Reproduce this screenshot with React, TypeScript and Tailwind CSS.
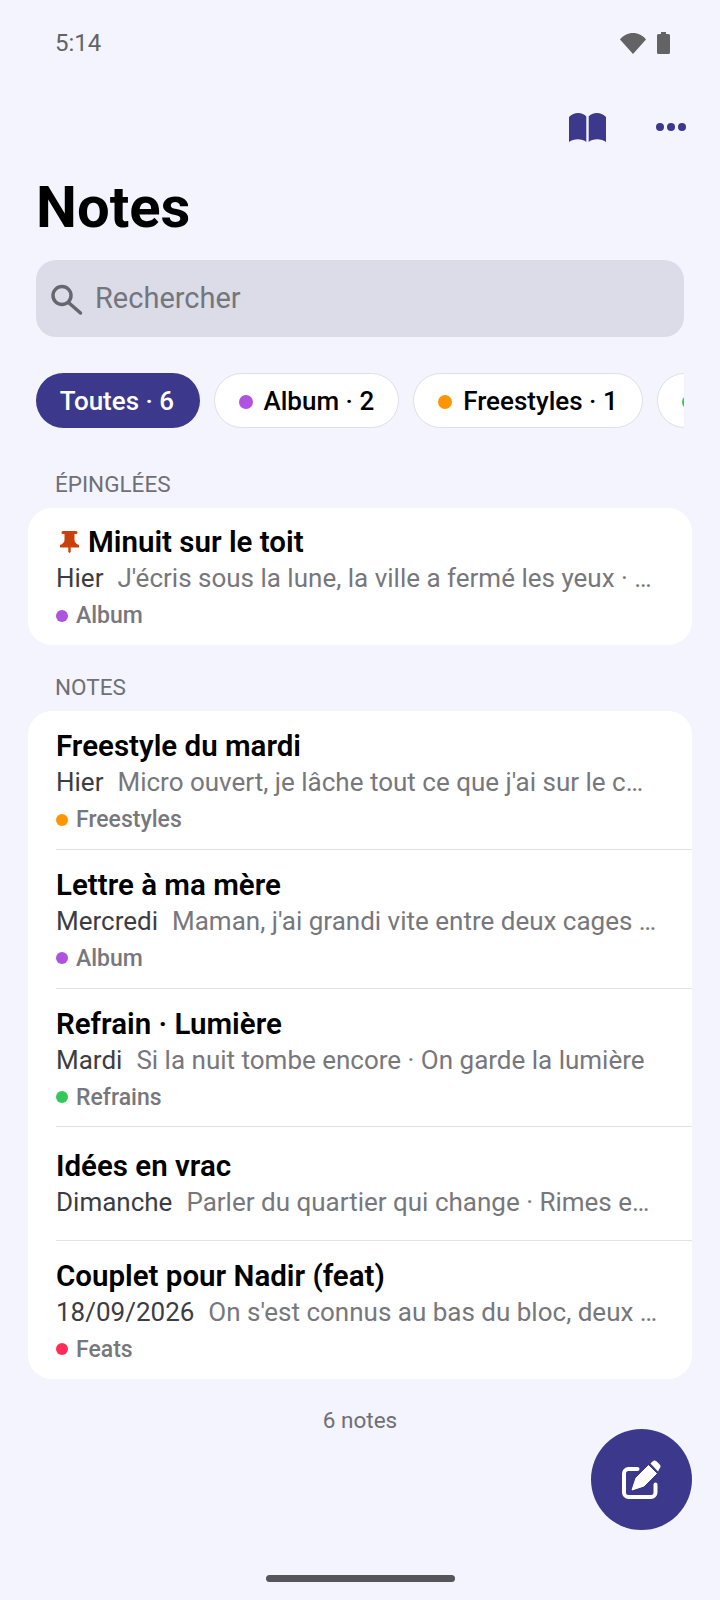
const notes = [
  { title: 'Freestyle du mardi', date: 'Hier', text: "Micro ouvert, je lâche tout ce que j'ai sur le c…", tag: 'Freestyles', dot: 'bg-[#ff9500]' },
  { title: 'Lettre à ma mère', date: 'Mercredi', text: "Maman, j'ai grandi vite entre deux cages …", tag: 'Album', dot: 'bg-[#af52de]' },
  { title: 'Refrain · Lumière', date: 'Mardi', text: 'Si la nuit tombe encore · On garde la lumière', tag: 'Refrains', dot: 'bg-[#34c759]' },
  { title: 'Idées en vrac', date: 'Dimanche', text: 'Parler du quartier qui change · Rimes e…' },
  { title: 'Couplet pour Nadir (feat)', date: '18/09/2026', text: "On s'est connus au bas du bloc, deux …", tag: 'Feats', dot: 'bg-[#ff2d55]' },
];

function Chip({ label, dot, padding }: { label: string; dot: string; padding: string }) {
  return (
    <div className={`flex h-[55px] shrink-0 items-center gap-[11px] rounded-full border border-[#dfdfe6] bg-white pt-[2px] text-[26px] font-medium text-black ${padding}`}>
      <span className={`h-[14px] w-[14px] rounded-full ${dot}`} />
      {label}
    </div>
  );
}

function NoteRow({ title, date, text, tag, dot, pinned, last }: {
  title: string; date: string; text: string; tag?: string; dot?: string; pinned?: boolean; last?: boolean;
}) {
  const spacing = !tag ? 'pt-[21px] pb-[19.5px]' : pinned ? 'pt-[16px] pb-[10.5px]' : last ? 'pt-[17px] pb-[10.5px]' : 'pt-[17px] pb-[10.25px]';
  return (
    <div className={`ml-7 ${spacing} ${last ? '' : 'border-b border-[#e2e2e6]'}`}>
      <div className="flex h-[36px] items-center text-[29.5px] font-semibold leading-[36px] text-black">
        {pinned && (
          <svg viewBox="0 0 19 22" className="ml-[4px] mr-[9px] h-[22px] w-[19px]" fill="#c9410a">
            <path d="M3 0h13a1.5 1.5 0 0 1 0 3h-1.5v6c0 2.5 2 4 4.5 5v2.5H10.7V21l-1.2 1-1.2-1v-4.5H0V14c2.5-1 4.5-2.5 4.5-5V3H3a1.5 1.5 0 0 1 0-3Z" />
          </svg>
        )}
        {title}
      </div>
      <div className="flex h-[36px] items-center whitespace-nowrap text-[26px] leading-[36px]">
        <span className="text-[#3c3c43]">{date}</span>
        <span className="ml-[14px] text-[#77777c]">{text}</span>
      </div>
      {tag && (
        <div className="mt-[2.5px] flex h-[36px] items-center gap-2 text-[23px] font-medium text-[#77777c]">
          <span className={`mb-[2px] h-[12px] w-[12px] rounded-full ${dot}`} />
          {tag}
        </div>
      )}
    </div>
  );
}

export default function App() {
  return (
    <div className="relative h-[1600px] w-[720px] overflow-hidden bg-[#f3f4fe] font-['Roboto',sans-serif]">
      {/* status bar */}
      <div className="flex h-[86px] items-center justify-between pl-[55px] pr-[50px] text-[24px] text-[#636366]">
        <span>5:14</span>
        <div className="flex items-center gap-[11px]">
          <svg viewBox="0 0 26 21" className="h-[21px] w-[26px]" fill="#636366">
            <path d="M0 6.5C3 2.5 8 0 13 0s10 2.5 13 6.5L13 21Z" />
          </svg>
          <svg viewBox="0 0 13 22" className="h-[22px] w-[13px]" fill="#636366">
            <path d="M4 0h5v2h2.5A1.5 1.5 0 0 1 13 3.5v17a1.5 1.5 0 0 1-1.500 1.500h-10A1.500 1.500 0 0 1 0 20.500v-17A1.500 1.500 0 0 1 1.500 2H4Z" />
          </svg>
        </div>
      </div>

      {/* actions */}
      <div className="mt-[13px] flex h-[56px] items-center justify-end gap-[50px] pr-[34px]">
        <svg viewBox="0 0 37 29" className="h-[29px] w-[37px]" fill="#3c388c">
          <path d="M0 4C2.500 1.200 6 0 9 0c3.500 0 6.500 1.200 8.300 3.500V29c-2-1.800-5-2.800-8.500-2.800S2.500 27.200 0 29Z" />
          <path d="M37 4C34.500 1.200 31 0 28 0c-3.500 0-6.500 1.200-8.300 3.500V29c2-1.800 5-2.800 8.500-2.800S34.500 27.200 37 29Z" />
        </svg>
        <svg viewBox="0 0 30 8" className="h-[8px] w-[30px]" fill="#3c388c">
          <circle cx="4" cy="4" r="4" />
          <circle cx="15" cy="4" r="4" />
          <circle cx="26" cy="4" r="4" />
        </svg>
      </div>

      <h1 className="ml-[36px] mt-[18px] text-[58px] font-bold leading-[68px] text-black">Notes</h1>

      <div className="mx-[36px] mt-[19px] flex h-[77px] items-center gap-[9px] rounded-[20px] bg-[#dcdce9] pl-[14px]">
        <svg viewBox="0 0 36 36" className="h-[36px] w-[36px]" fill="none" stroke="#66666e" strokeWidth="3.500" strokeLinecap="round">
          <circle cx="12" cy="14.500" r="9" />
          <path d="M18.500 21.500 30.500 32" />
        </svg>
        <span className="text-[29px] text-[#75757c]">Rechercher</span>
      </div>

      <div className="mx-[36px] mt-[36px] flex gap-[14px] overflow-hidden">
        <div className="flex h-[55px] w-[164px] shrink-0 items-center justify-center rounded-full bg-[#3c388c] pt-[2px] pr-[2px] text-[26px] font-medium text-white">Toutes · 6</div>
        <Chip label="Album · 2" dot="bg-[#af52de]" padding="px-[23.5px]" />
        <Chip label="Freestyles · 1" dot="bg-[#ff9500]" padding="px-[24.5px]" />
        <Chip label="Refrains · 1" dot="bg-[#34c759]" padding="px-[24px]" />
      </div>

      <div className="ml-[55px] mt-[40px] text-[22.500px] leading-[32px] text-[#6f6f75]">ÉPINGLÉES</div>
      <div className="mx-[28px] mt-[8px] rounded-[24px] bg-white">
        <NoteRow pinned last title="Minuit sur le toit" date="Hier" text="J'écris sous la lune, la ville a fermé les yeux · …" tag="Album" dot="bg-[#af52de]" />
      </div>

      <div className="ml-[55px] mt-[26px] text-[22.500px] leading-[32px] text-[#6f6f75]">NOTES</div>
      <div className="mx-[28px] mt-[8px] rounded-[24px] bg-white">
        {notes.map((n, i) => (
          <NoteRow key={n.title} {...n} last={i === notes.length - 1} />
        ))}
      </div>

      <div className="mt-[28px] text-center text-[22.500px] leading-[26px] text-[#6f6f75]">6 notes</div>

      {/* fab */}
      <div className="absolute left-[591px] top-[1429px] flex h-[101px] w-[101px] items-center justify-center rounded-full bg-[#3c388c]">
        <svg viewBox="-0.500 0.500 54 54" className="h-[54px] w-[54px]">
          <path d="M22 16.500H13A4.500 4.500 0 0 0 8.500 21V40A4.500 4.500 0 0 0 13 44.500H35.500A4.500 4.500 0 0 0 40 40V32" fill="none" stroke="#fff" strokeWidth="4" strokeLinecap="round" />
          <path d="M16.500 37.500 20.500 25.500 33 13 41 21 28.500 33.500Z" fill="#fff" stroke="#fff" strokeWidth="1" strokeLinejoin="round" />
          <path d="M35 11 37 9a3 3 0 0 1 4.200 0l2.800 2.800a3 3 0 0 1 0 4.200L42.500 19Z" fill="#fff" />
        </svg>
      </div>

      {/* home indicator */}
      <div className="absolute left-[266px] top-[1575px] h-[7px] w-[189px] rounded-full bg-[#55555a]" />
    </div>
  );
}
